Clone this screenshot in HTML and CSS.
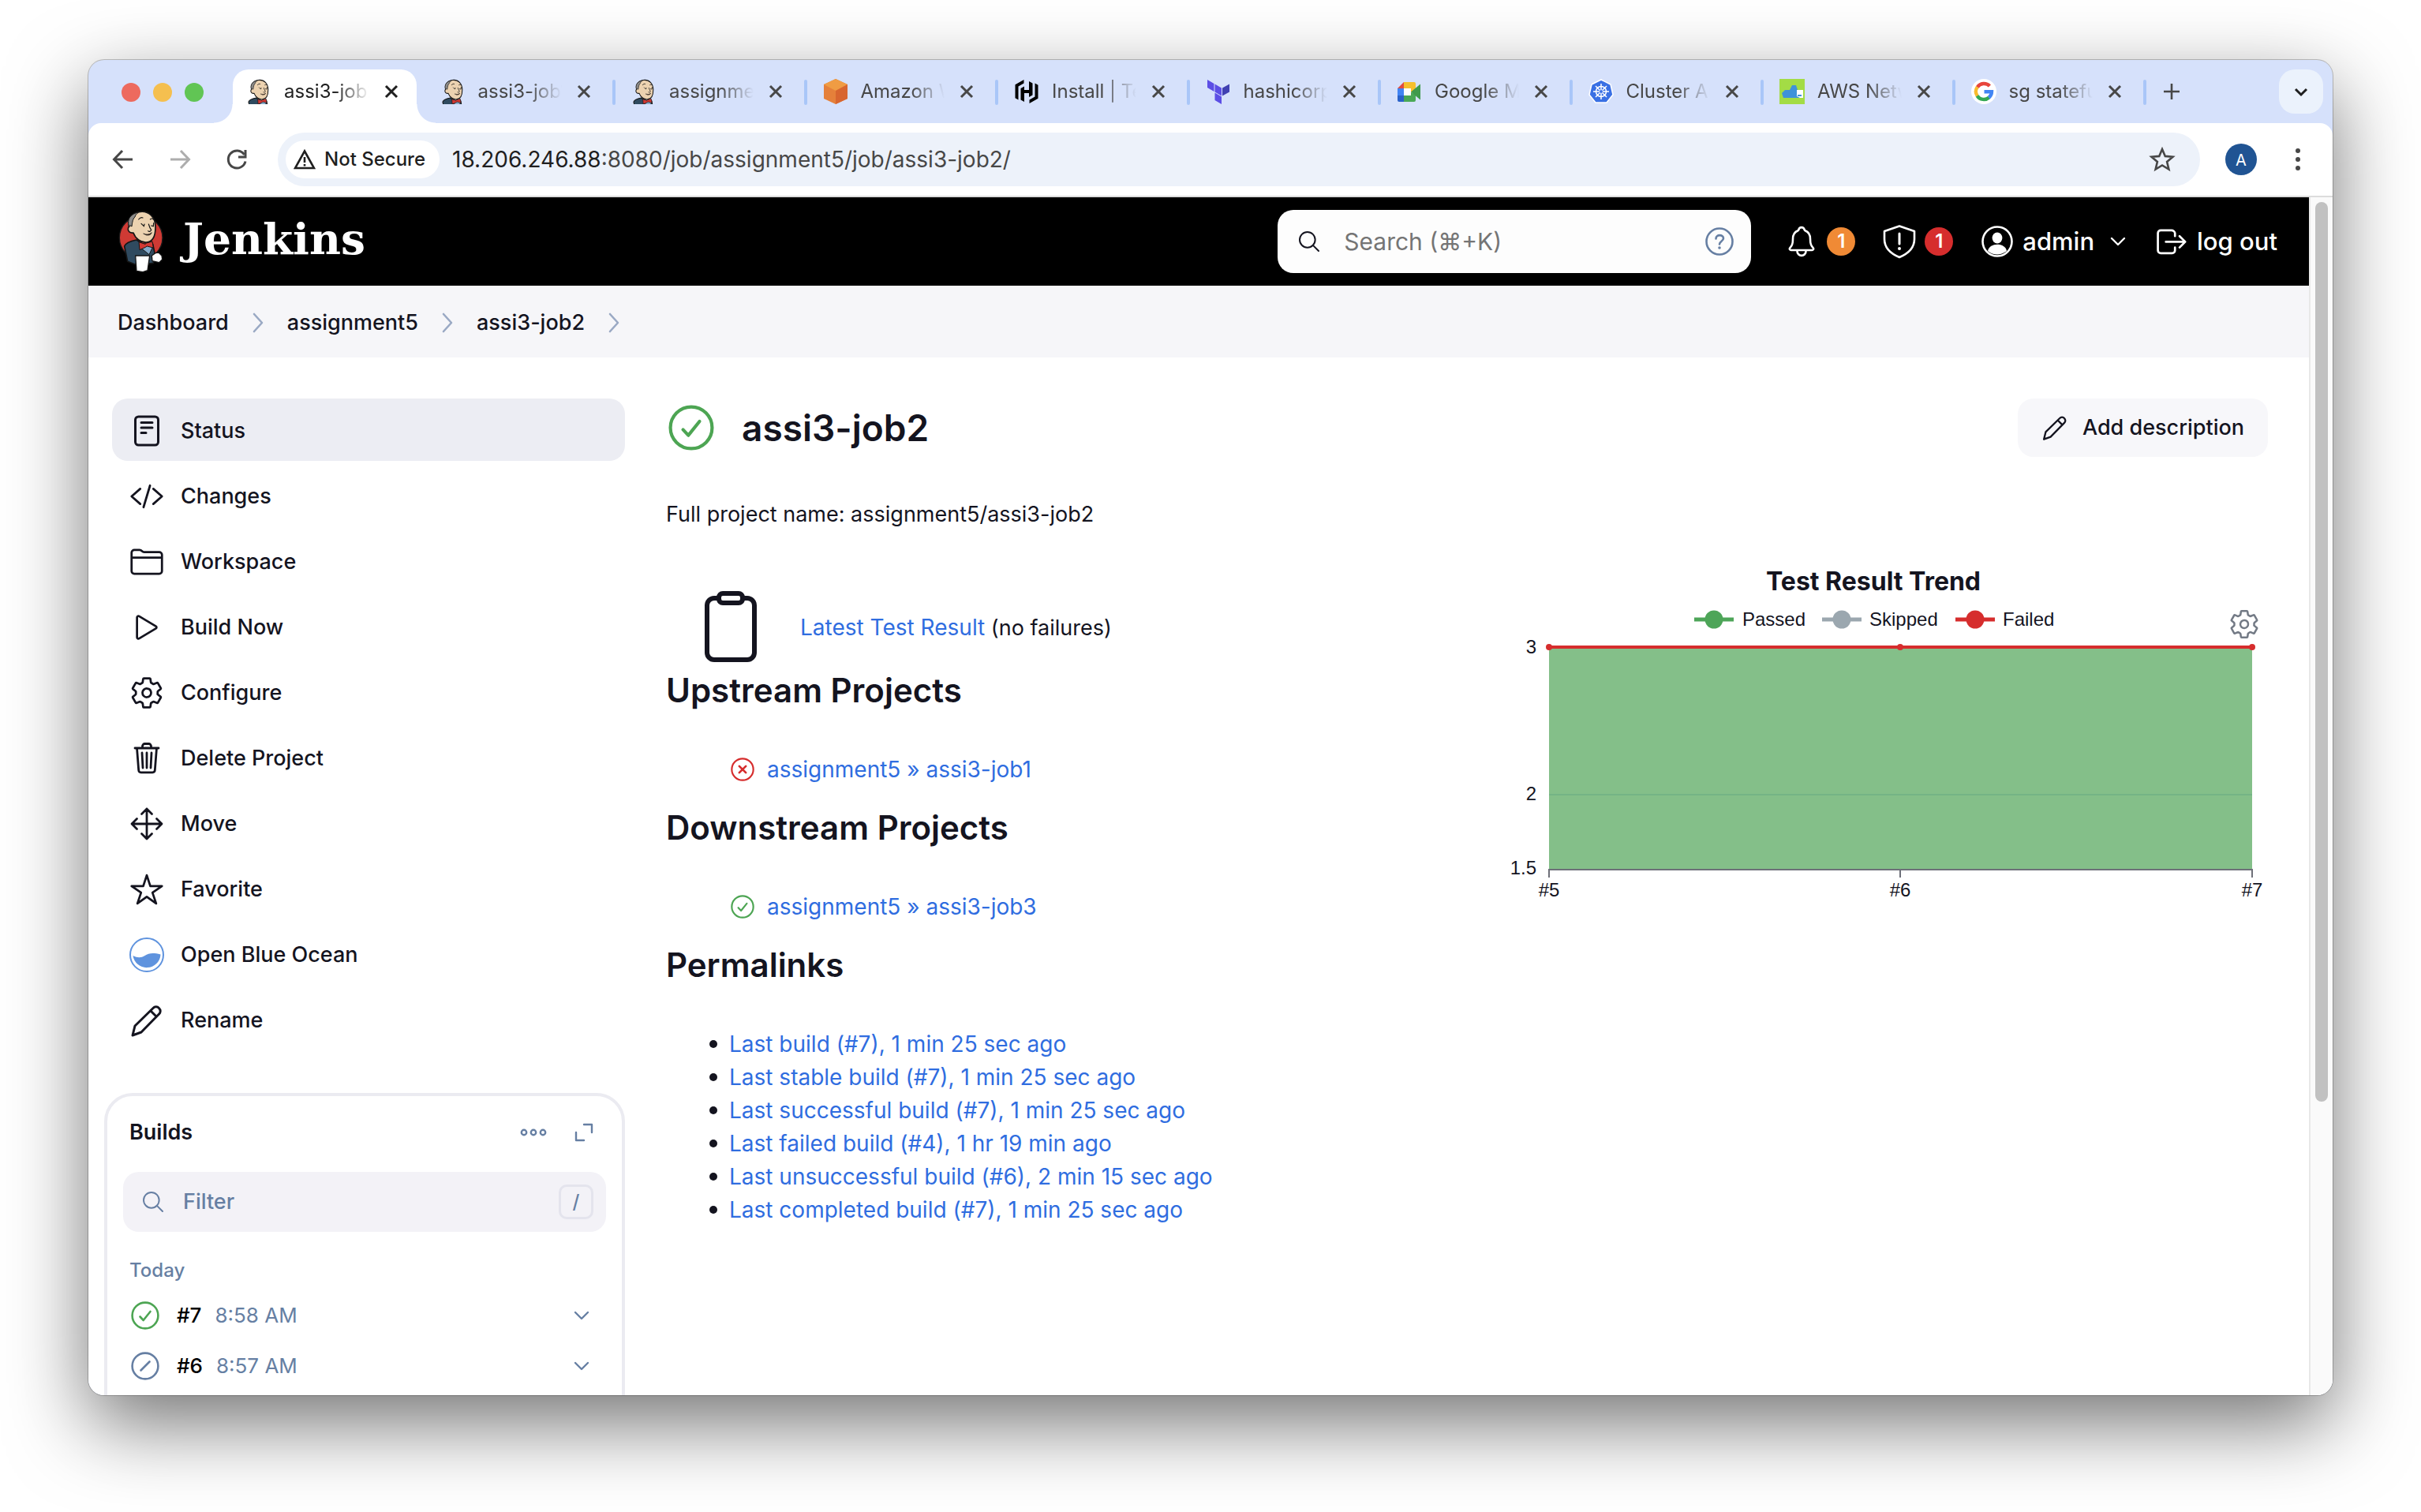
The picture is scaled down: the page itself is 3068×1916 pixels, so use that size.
FILE: index.html
```html
<!DOCTYPE html>
<html lang="en">
<head>
<meta charset="utf-8">
<title>assi3-job2 [Jenkins]</title>
<meta name="viewport" content="width=device-width, initial-scale=1">
<link rel="stylesheet" href="styles.css">
</head>
<body>

<svg class="sprite" aria-hidden="true">
  <symbol id="i-close" viewBox="0 0 24 24"><path d="M5 5l14 14M19 5L5 19" fill="none" stroke="currentColor" stroke-width="3"/></symbol>
  <symbol id="i-down" viewBox="0 0 24 24"><path d="M4 8l8 8 8-8" fill="none" stroke="currentColor" stroke-width="2.4" stroke-linecap="round" stroke-linejoin="round"/></symbol>
  <symbol id="i-chev" viewBox="0 0 16 28"><path d="M3 3l10 11L3 25" fill="none" stroke="currentColor" stroke-width="2.6" stroke-linecap="round" stroke-linejoin="round"/></symbol>
  <symbol id="i-search" viewBox="0 0 512 512"><path d="M221.09 64a157.09 157.09 0 10157.09 157.09A157.1 157.1 0 00221.09 64zM338.29 338.29L448 448" fill="none" stroke="currentColor" stroke-width="32" stroke-linecap="round"/></symbol>
  <symbol id="i-gear" viewBox="0 0 512 512"><path d="M262.29 192.31a64 64 0 1057.4 57.4 64.13 64.13 0 00-57.4-57.4zM416.39 256a154.34 154.34 0 01-1.53 20.79l45.21 35.46a10.81 10.81 0 012.45 13.75l-42.77 74a10.81 10.81 0 01-13.14 4.59l-44.9-18.08a16.11 16.11 0 00-15.17 1.75A164.48 164.48 0 01325 400.8a15.94 15.94 0 00-8.82 12.14l-6.73 47.89a11.08 11.08 0 01-10.68 9.17h-85.54a11.11 11.11 0 01-10.69-8.87l-6.72-47.82a16.07 16.07 0 00-9-12.22 155.3 155.3 0 01-21.46-12.57 16 16 0 00-15.11-1.71l-44.89 18.07a10.81 10.81 0 01-13.14-4.58l-42.77-74a10.8 10.8 0 012.45-13.75l38.21-30a16.05 16.05 0 006-14.08c-.36-4.17-.58-8.33-.58-12.5s.21-8.27.58-12.35a16 16 0 00-6.07-13.94l-38.19-30A10.81 10.81 0 0149.48 186l42.77-74a10.81 10.81 0 0113.14-4.59l44.9 18.08a16.11 16.11 0 0015.17-1.75A164.48 164.48 0 01187 111.2a15.94 15.94 0 008.82-12.14l6.73-47.89A11.08 11.08 0 01213.23 42h85.54a11.11 11.11 0 0110.69 8.87l6.72 47.82a16.07 16.07 0 009 12.22 155.3 155.3 0 0121.46 12.57 16 16 0 0015.11 1.71l44.89-18.07a10.81 10.81 0 0113.14 4.58l42.77 74a10.8 10.8 0 01-2.45 13.75l-38.21 30a16.05 16.05 0 00-6.05 14.08c.33 4.14.55 8.3.55 12.47z" fill="none" stroke="currentColor" stroke-width="32" stroke-linecap="round" stroke-linejoin="round"/></symbol>
  <symbol id="i-pencil" viewBox="0 0 44 44"><path d="M4 41l3-12L30 6.500a5 5 0 017.500 0a5 5 0 010 7.500L15 37zM27 10l7 7" fill="none" stroke="currentColor" stroke-width="3" stroke-linecap="round" stroke-linejoin="round"/></symbol>
  <symbol id="i-ok" viewBox="0 0 36 36"><circle cx="18" cy="18" r="16.400" fill="none" stroke="currentColor" stroke-width="2.600"/><path d="M11.500 19.500l4.200 4.500 8.800-11" fill="none" stroke="currentColor" stroke-width="2.600" stroke-linecap="round" stroke-linejoin="round"/></symbol>
  <symbol id="i-bad" viewBox="0 0 36 36"><circle cx="18" cy="18" r="16.400" fill="none" stroke="currentColor" stroke-width="2.600"/><path d="M13 13l10 10M23 13L13 23" fill="none" stroke="currentColor" stroke-width="3.200" stroke-linecap="round"/></symbol>
  <symbol id="i-aborted" viewBox="0 0 36 36"><circle cx="18" cy="18" r="16.400" fill="none" stroke="currentColor" stroke-width="2.600"/><path d="M12.500 23.500l11-11" fill="none" stroke="currentColor" stroke-width="2.600" stroke-linecap="round"/></symbol>

  <symbol id="butler" viewBox="20 18 172 240" overflow="hidden">
    <path d="M42 156c4-12 26-20 46-24l24 16 38 0 8 38-6 34-62 8-36-14-6-30z" fill="#2f4a5f" stroke="#141414" stroke-width="5" stroke-linejoin="round"/>
    <path d="M104 162l32 26 16-34-22-6z" fill="#84a9c9" stroke="#141414" stroke-width="3"/>
    <path d="M60 82C52 50 72 28 102 25c34-4 58 22 58 58 0 34-10 56-34 58-22 2-42-14-50-36-12 2-22-6-20-16 1-6 3-8 4-7z" fill="#ecd2b0" stroke="#141414" stroke-width="5" stroke-linejoin="round"/>
    <path d="M59 80C50 54 66 32 96 27c-8 6-12 10-14 18-8 6-10 20-12 36-4-4-8-4-11-1z" fill="#8b8a88" stroke="#141414" stroke-width="3"/>
    <path d="M96 54q8-10 16-6M140 54q8-6 12 0M106 70l10 10 2-8M144 78l8 2 1-12M134 72q4 14 10 22-6 10-12 4" fill="none" stroke="#141414" stroke-width="3.500" stroke-linecap="round"/>
    <path d="M114 108q18 8 32-4-4 12-20 10z" fill="#5a3b2d" stroke="#141414" stroke-width="2"/>
    <path d="M97 140l24 8 5-4 22-6 4 24-24-6-6 4-22 10z" fill="#d33833" stroke="#141414" stroke-width="3" stroke-linejoin="round"/>
    <path d="M146 192l14-10 12-2 12 12 2 14-12 12-26-6z" fill="#fff" stroke="#141414" stroke-width="4"/>
    <path d="M84 192l54 0-8 56-18 6-24-4z" fill="#fff" stroke="#141414" stroke-width="4" stroke-linejoin="round"/>
  </symbol>
  <symbol id="fav-jenkins" viewBox="30 18 148 152"><use href="#butler" x="20" y="18" width="172" height="240"/></symbol>
</svg>

<div class="window">
  <header class="tabstrip">
    <div class="lights"><i class="light red"></i><i class="light amber"></i><i class="light green"></i></div>
    <ul class="tabs">
      <li class="tab active"><div class="tab-body"><svg class="fav"><use href="#fav-jenkins"/></svg><span class="tab-label">assi3-job2</span><button class="tab-close" aria-label="Close tab"><svg><use href="#i-close"/></svg></button></div></li>
      <li class="tab"><div class="tab-body"><svg class="fav"><use href="#fav-jenkins"/></svg><span class="tab-label">assi3-job1</span><button class="tab-close" aria-label="Close tab"><svg><use href="#i-close"/></svg></button></div></li>
      <li class="tab"><div class="tab-body"><svg class="fav"><use href="#fav-jenkins"/></svg><span class="tab-label">assignment5</span><button class="tab-close" aria-label="Close tab"><svg><use href="#i-close"/></svg></button></div></li>
      <li class="tab"><div class="tab-body">
        <svg class="fav" viewBox="0 0 32 32"><path d="M16 0l15 7v18l-15 7L1 25V7z" fill="#e5803a"/><path d="M16 0l15 7-15 8L1 7z" fill="#f09c43"/><path d="M16 15l15-8v18l-15 7z" fill="#d8652f"/></svg>
        <span class="tab-label">Amazon Web</span><button class="tab-close" aria-label="Close tab"><svg><use href="#i-close"/></svg></button></div></li>
      <li class="tab"><div class="tab-body">
        <svg class="fav" viewBox="0 0 32 32"><path d="M12.500 1L1.500 7.300v17l4 2.300V9.600l7-4zM19.500 31l11-6.300v-17l-4-2.300v17l-7 4zM8.500 12l4.500-2.500V14h6V3l4.500 2.500v15L19 23v-5h-6v11l-4.500-2.500z" fill="#000"/></svg>
        <span class="tab-label">Install | Terraform</span><button class="tab-close" aria-label="Close tab"><svg><use href="#i-close"/></svg></button></div></li>
      <li class="tab"><div class="tab-body">
        <svg class="fav" viewBox="0 0 32 32"><path d="M2 1l8.500 5v10L2 11zM11.500 6.500l8.500 5v10l-8.500-5zM11.500 17.500l8.500 5V32l-8.500-5z" fill="#5c4ee5"/><path d="M21 11.500l9-5v10l-9 5z" fill="#4040b2"/></svg>
        <span class="tab-label">hashicorp/</span><button class="tab-close" aria-label="Close tab"><svg><use href="#i-close"/></svg></button></div></li>
      <li class="tab"><div class="tab-body">
        <svg class="fav" viewBox="0 0 32 32"><path d="M1 12h8v10H1z" fill="#4284f3"/><path d="M1 21h8v8H3a2 2 0 01-2-2z" fill="#2a62c9"/><path d="M1 12l8-8v8z" fill="#e04a3f"/><path d="M9 4h13a2 2 0 012 2v8l-6 3v-5H9z" fill="#f6bf2d"/><path d="M9 21h9v-4l6 3v7a2 2 0 01-2 2H9z" fill="#4aa856"/><path d="M9 12h9v9H9z" fill="#fff"/><path d="M18 16.500l12-10v20z" fill="#3f9a4c"/></svg>
        <span class="tab-label">Google Meet</span><button class="tab-close" aria-label="Close tab"><svg><use href="#i-close"/></svg></button></div></li>
      <li class="tab"><div class="tab-body">
        <svg class="fav" viewBox="0 0 32 32"><path d="M16 1l12 6 3 13-8 10H9L1 20 4 7z" fill="#3970e4" stroke="#fff" stroke-width="1.500" stroke-linejoin="round"/><g fill="none" stroke="#fff" stroke-width="1.500"><circle cx="16" cy="16" r="6.500"/><path d="M16 6v20M6 16h20M9 9l14 14M23 9L9 23"/></g><circle cx="16" cy="16" r="2" fill="#3970e4"/></svg>
        <span class="tab-label">Cluster Autoscaler</span><button class="tab-close" aria-label="Close tab"><svg><use href="#i-close"/></svg></button></div></li>
      <li class="tab"><div class="tab-body">
        <svg class="fav" viewBox="0 0 32 32"><path d="M0 0h32v32H0z" fill="#a3dc45"/><path d="M3 18l4-4h6l3-6h5l2 6h4v10H5z" fill="#3f92d9"/><path d="M22 14h8v10h-4l-4-2z" fill="#fff"/><path d="M23 20h5v2h-5z" fill="#3f92d9"/></svg>
        <span class="tab-label">AWS Network</span><button class="tab-close" aria-label="Close tab"><svg><use href="#i-close"/></svg></button></div></li>
      <li class="tab"><div class="tab-body">
        <svg class="fav" viewBox="0 0 32 32"><circle cx="16" cy="16" r="16" fill="#fff"/><g fill="none" stroke-width="4.400"><path d="M23.400 9A10 10 0 007.800 10.500" stroke="#e8453c"/><path d="M7.800 10.300a10 10 0 000 11.400" stroke="#f9bb2d"/><path d="M7.600 21.500a10 10 0 0015 2" stroke="#34a853"/><path d="M16.500 16.200H26a10 10 0 01-3.600 7.500" stroke="#4285f4"/></g></svg>
        <span class="tab-label">sg stateful</span><button class="tab-close" aria-label="Close tab"><svg><use href="#i-close"/></svg></button></div></li>
    </ul>
    <button class="new-tab" aria-label="New tab"><svg viewBox="0 0 24 24"><path d="M12 2v20M2 12h20" fill="none" stroke="currentColor" stroke-width="2.600"/></svg></button>
    <button class="tab-search" aria-label="Search tabs"><svg viewBox="0 0 24 24"><path d="M5 9l7 7 7-7" fill="none" stroke="currentColor" stroke-width="3"/></svg></button>
  </header>

  <div class="toolbar">
    <button class="tool" aria-label="Back"><svg viewBox="0 0 40 40"><path d="M32 20H9M19 9L8.500 20 19 31" fill="none" stroke="currentColor" stroke-width="3"/></svg></button>
    <button class="tool dim" aria-label="Forward"><svg viewBox="0 0 40 40"><path d="M8 20h23M21 9l10.500 11L21 31" fill="none" stroke="currentColor" stroke-width="3"/></svg></button>
    <button class="tool" aria-label="Reload"><svg viewBox="0 0 40 40"><path d="M29.500 14A11 11 0 1031 22.500" fill="none" stroke="currentColor" stroke-width="3"/><path d="M31 8v9h-9" fill="none" stroke="currentColor" stroke-width="3"/></svg></button>
    <div class="omnibox">
      <button class="chip"><svg viewBox="0 0 28 28"><path d="M14 3.500L26 25H2z" fill="none" stroke="currentColor" stroke-width="2.600"/><path d="M14 11v7M14 20v2.600" stroke="currentColor" stroke-width="2.600"/></svg>Not Secure</button>
      <span class="url"><b>18.206.246.88</b>:8080/job/assignment5/job/assi3-job2/</span>
      <button class="tool" aria-label="Bookmark"><svg viewBox="0 0 40 40"><path d="M20 7l3.800 8.900 9.700.8-7.400 6.300 2.300 9.500-8.400-5.100-8.400 5.100 2.300-9.500-7.400-6.300 9.700-.8z" fill="none" stroke="currentColor" stroke-width="2.600"/></svg></button>
    </div>
    <button class="avatar">A</button>
    <button class="tool" aria-label="Menu"><svg viewBox="0 0 40 40"><g fill="currentColor"><circle cx="20" cy="9" r="3"/><circle cx="20" cy="20" r="3"/><circle cx="20" cy="31" r="3"/></g></svg></button>
  </div>

  <div class="viewport">
    <div class="page">
      <header class="masthead">
        <a class="brand" href="#">
          <svg class="brand-mark" viewBox="20 18 172 240"><circle cx="105" cy="124" r="82" fill="#cf3a34" stroke="#1a1a1a" stroke-width="4"/><use href="#butler" x="20" y="18" width="172" height="240"/></svg>
          <span>Jenkins</span>
        </a>
        <label class="search"><svg><use href="#i-search"/></svg><input type="search" aria-label="Search" placeholder="Search (⌘+K)"><a class="help" href="#" aria-label="Search help"><svg viewBox="0 0 36 36"><circle cx="18" cy="18" r="16.500" fill="none" stroke="currentColor" stroke-width="2.600"/><path d="M13.500 14.500c0-6 9.500-5.500 9.500-.5 0 3.800-5 3.600-5 7.500" fill="none" stroke="currentColor" stroke-width="2.600" stroke-linecap="round"/><circle cx="18" cy="26" r="1.800" fill="currentColor"/></svg></a></label>
        <nav class="user-nav">
          <a href="#" aria-label="Notifications"><svg viewBox="0 0 512 512"><path d="M427.680 351.430C402 320 383.870 304 383.870 217.350 383.870 138 343.350 109.730 310 96c-4.430-1.820-8.600-6-9.950-10.550C294.200 65.540 277.800 48 256 48s-38.210 17.550-44 37.470c-1.350 4.600-5.520 8.710-9.950 10.530-33.390 13.750-73.870 41.920-73.870 121.350C128.130 304 110 320 84.320 351.430 73.680 364.450 83 384 101.610 384h308.880c18.510 0 27.770-19.610 17.190-32.570zM320 384v16a64 64 0 01-128 0v-16" fill="none" stroke="currentColor" stroke-width="30" stroke-linejoin="round"/></svg><span class="badge warn">1</span></a>
          <a href="#" aria-label="Security warnings"><svg viewBox="0 0 44 44"><path d="M22 2.500l19 6.500v10c0 10-7 18-19 23C10 37 3 29 3 19V9z" fill="none" stroke="currentColor" stroke-width="2.600" stroke-linejoin="round"/><path d="M22 12v13" stroke="currentColor" stroke-width="3" stroke-linecap="round"/><circle cx="22" cy="31" r="2" fill="currentColor"/></svg><span class="badge danger">1</span></a>
          <a href="#"><svg viewBox="0 0 44 44"><circle cx="22" cy="22" r="18.500" fill="none" stroke="currentColor" stroke-width="2.600"/><ellipse cx="22" cy="17.500" rx="6.400" ry="7" fill="currentColor"/><path d="M10 34c2-11 22-11 24 0-7 6-17 6-24 0z" fill="currentColor"/></svg>admin<svg class="caret"><use href="#i-down"/></svg></a>
          <a href="#"><svg viewBox="0 0 512 512"><path d="M304 336v40a40 40 0 01-40 40H104a40 40 0 01-40-40V136a40 40 0 0140-40h152c22.090 0 48 17.910 48 40v40M368 336l80-80-80-80M176 256h256" transform="translate(-14 -8) scale(1.050)" fill="none" stroke="currentColor" stroke-width="30" stroke-linecap="round" stroke-linejoin="round"/></svg>log out</a>
        </nav>
      </header>

      <nav class="crumbs">
        <a href="#">Dashboard</a><svg><use href="#i-chev"/></svg><a href="#">assignment5</a><svg><use href="#i-chev"/></svg><a href="#">assi3-job2</a><svg><use href="#i-chev"/></svg>
      </nav>

      <div class="columns">
        <aside class="side">
          <nav class="tasks">
            <a class="task current" href="#"><svg viewBox="0 0 44 44"><g fill="none" stroke="currentColor" stroke-width="3" stroke-linecap="round"><rect x="7.500" y="4" width="29" height="36" rx="4"/><path d="M15 11.500h14M15 18h14M15 24.500h6"/></g></svg>Status</a>
            <a class="task" href="#"><svg viewBox="0 0 512 512"><path d="M160 368L32 256l128-112M352 368l128-112-128-112M304 96l-96 320" fill="none" stroke="currentColor" stroke-width="32" stroke-linecap="round" stroke-linejoin="round"/></svg>Changes</a>
            <a class="task" href="#"><svg viewBox="0 0 512 512"><path d="M440 432H72a40 40 0 01-40-40V120a40 40 0 0140-40h75.890a40 40 0 0122.190 6.720l27.840 18.560a40 40 0 0022.190 6.720H440a40 40 0 0140 40v240a40 40 0 01-40 40zM32 192h448" fill="none" stroke="currentColor" stroke-width="32" stroke-linecap="round" stroke-linejoin="round"/></svg>Workspace</a>
            <a class="task" href="#"><svg viewBox="0 0 512 512"><path d="M112 111v290c0 17.440 17 28.520 31 20.160l247.900-148.370c12.120-7.250 12.120-26.330 0-33.580L143 90.840c-14-8.360-31 2.720-31 20.160z" fill="none" stroke="currentColor" stroke-width="32"/></svg>Build Now</a>
            <a class="task" href="#"><svg><use href="#i-gear"/></svg>Configure</a>
            <a class="task" href="#"><svg viewBox="0 0 44 44"><g fill="none" stroke="currentColor" stroke-width="2.800" stroke-linecap="round" stroke-linejoin="round"><path d="M7 9h30M9.500 9l2.200 28a3 3 0 003 2.800h14.600a3 3 0 003-2.800l2.200-28M16.500 9V6.500a3 3 0 013-3h5a3 3 0 013 3V9M16 15l1 19M22 15v19M28 15l-1 19"/></g></svg>Delete Project</a>
            <a class="task" href="#"><svg viewBox="0 0 44 44"><path d="M22 3v38M3 22h38M15.500 9.500L22 3l6.500 6.500M15.500 34.500L22 41l6.500-6.500M9.500 15.500L3 22l6.500 6.500M34.500 15.500L41 22l-6.500 6.500" fill="none" stroke="currentColor" stroke-width="2.800" stroke-linecap="round" stroke-linejoin="round"/></svg>Move</a>
            <a class="task" href="#"><svg viewBox="0 0 512 512"><path d="M480 208H308L256 48l-52 160H32l140 96-54 160 138-100 138 100-54-160z" fill="none" stroke="currentColor" stroke-width="32" stroke-linejoin="round"/></svg>Favorite</a>
            <a class="task" href="#"><svg viewBox="0 0 44 44"><circle cx="22" cy="22" r="21" fill="none" stroke="#5f93de" stroke-width="2"/><path d="M4.500 23c6 3 10 3 15 0s10-4 20-1.500a17.600 17.600 0 01-35 1.500z" fill="#5f93de"/></svg>Open Blue Ocean</a>
            <a class="task" href="#"><svg><use href="#i-pencil"/></svg>Rename</a>
          </nav>

          <section class="builds">
            <div class="builds-head">
              <h2>Builds</h2>
              <button aria-label="More"><svg class="w40" viewBox="0 0 40 40"><g fill="none" stroke="currentColor" stroke-width="2.400"><circle cx="8" cy="20" r="3.200"/><circle cx="20" cy="20" r="3.200"/><circle cx="32" cy="20" r="3.200"/></g></svg></button>
              <button aria-label="Expand"><svg class="w32" viewBox="0 0 32 32"><path d="M16 6h10v10M6 16v10h10" fill="none" stroke="currentColor" stroke-width="2.400" stroke-linecap="round" stroke-linejoin="round"/></svg></button>
            </div>
            <label class="filter"><svg><use href="#i-search"/></svg><input type="text" aria-label="Filter builds" placeholder="Filter"><kbd>/</kbd></label>
            <p class="day">Today</p>
            <a class="build" href="#"><svg class="ok"><use href="#i-ok"/></svg><b>#7</b><span>8:58 AM</span><svg class="caret"><use href="#i-down"/></svg></a>
            <a class="build" href="#"><svg><use href="#i-aborted"/></svg><b>#6</b><span>8:57 AM</span><svg class="caret"><use href="#i-down"/></svg></a>
          </section>
        </aside>

        <main class="main">
          <div class="title-row">
            <svg class="status ok"><use href="#i-ok"/></svg>
            <h1>assi3-job2</h1>
            <button class="describe"><svg><use href="#i-pencil"/></svg>Add description</button>
          </div>
          <p class="full-name">Full project name: assignment5/assi3-job2</p>
          <div class="split">
            <div class="details">
              <div class="latest">
                <svg viewBox="0 0 96 96"><g fill="none" stroke="currentColor" stroke-width="6" stroke-linejoin="round"><rect x="18" y="11" width="60" height="78" rx="9"/><rect x="33" y="5" width="30" height="12" rx="5" fill="#fff"/></g></svg>
                <p><a href="#">Latest Test Result</a> (no failures)</p>
              </div>
              <h2>Upstream Projects</h2>
              <ul class="projects"><li><svg class="bad"><use href="#i-bad"/></svg><a href="#">assignment5 » assi3-job1</a></li></ul>
              <h2>Downstream Projects</h2>
              <ul class="projects"><li><svg class="ok"><use href="#i-ok"/></svg><a href="#">assignment5 » assi3-job3</a></li></ul>
              <h2>Permalinks</h2>
              <ul class="permalinks">
                <li><a href="#">Last build (#7), 1 min 25 sec ago</a></li>
                <li><a href="#">Last stable build (#7), 1 min 25 sec ago</a></li>
                <li><a href="#">Last successful build (#7), 1 min 25 sec ago</a></li>
                <li><a href="#">Last failed build (#4), 1 hr 19 min ago</a></li>
                <li><a href="#">Last unsuccessful build (#6), 2 min 15 sec ago</a></li>
                <li><a href="#">Last completed build (#7), 1 min 25 sec ago</a></li>
              </ul>
            </div>
            <svg class="chart" viewBox="0 0 1000 460" role="img" aria-label="Test Result Trend">
              <text class="chart-title" x="500" y="48" text-anchor="middle">Test Result Trend</text>
              <g stroke-width="5">
                <path d="M273 85h50" stroke="#4da558"/><circle cx="298" cy="85" r="11.500" fill="#4da558"/>
                <path d="M435 85h50" stroke="#9ba7af"/><circle cx="460" cy="85" r="11.500" fill="#9ba7af"/>
                <path d="M604 85h50" stroke="#d62d2d"/><circle cx="629" cy="85" r="11.500" fill="#d62d2d"/>
              </g>
              <g class="chart-text">
                <text x="334" y="93">Passed</text><text x="495" y="93">Skipped</text><text x="664" y="93">Failed</text>
                <g text-anchor="end"><text x="73" y="128">3</text><text x="73" y="314">2</text><text x="73" y="408">1.5</text></g>
                <g text-anchor="middle"><text x="89" y="436">#5</text><text x="534" y="436">#6</text><text x="980" y="436">#7</text></g>
              </g>
              <path d="M89 120h891v282H89z" fill="#84bf89"/>
              <path d="M89 307h891" stroke="#74b485" stroke-width="2"/>
              <path d="M88 402h893M89 402v10M534 402v10M980 402v10" fill="none" stroke="#6e7079" stroke-width="2"/>
              <path d="M89 120h891" stroke="#d62d2d" stroke-width="4"/>
              <g fill="#d62d2d"><circle cx="89" cy="120" r="4"/><circle cx="534" cy="120" r="4"/><circle cx="980" cy="120" r="4"/></g>
              <use class="chart-gear" href="#i-gear" x="950" y="71" width="40" height="40"/>
            </svg>
          </div>
        </main>
      </div>
    </div>
    <div class="scrollbar"><i></i></div>
  </div>
</div>
</body>
</html>
```

FILE: styles.css
```css
:root {
  --text: #14141f;
  --muted: #667fa3;
  --link: #2f6de0;
  --green: #4da553;
  --red: #d62d2d;
  --strip: #d6e1fb;
  --grey: #474747;
}

* { box-sizing: border-box; }

body {
  margin: 0;
  height: 100vh;
  padding: 76px 112px 148px;
  display: flex;
  background: #fff;
  color: var(--text);
  font: 27px/42px Inter, "Noto Sans", sans-serif;
}

h1, h2, p, ul { margin: 0; padding: 0; }
ul { list-style: none; }
a { color: inherit; text-decoration: none; }
svg { display: block; flex: none; }
button, input {
  margin: 0;
  padding: 0;
  border: 0;
  background: none;
  color: inherit;
  font: inherit;
}
input { outline: 0; min-width: 0; flex: 1; }
.sprite { position: absolute; width: 0; height: 0; }
.ok { color: var(--green); }
.bad { color: var(--red); }

.window {
  flex: 1;
  min-width: 0;
  display: flex;
  flex-direction: column;
  overflow: hidden;
  border-radius: 20px;
  background: var(--strip);
  box-shadow: 0 0 0 1px rgba(0, 0, 0, .22), 0 36px 100px rgba(0, 0, 0, .55);
}

/* Tab strip */
.tabstrip {
  height: 80px;
  flex: none;
  display: flex;
  align-items: flex-start;
  padding: 12px 12px 0 42px;
  font-size: 24px;
  line-height: 32px;
  color: var(--grey);
}
.lights { display: flex; gap: 16px; padding-top: 17px; margin-right: 37px; }
.light { width: 24px; height: 24px; border-radius: 50%; }
.light.red { background: #ed6a5e; }
.light.amber { background: #f5bf4f; }
.light.green { background: #61c554; }
.tabs { flex: 1; min-width: 0; display: flex; }
.tab { flex: 1; min-width: 0; display: flex; gap: 4px; }
.tab::after {
  content: "";
  width: 4px;
  height: 32px;
  margin-top: 13px;
  border-radius: 2px;
  background: #a9c6f8;
}
.tab.active { gap: 6px; }
.tab.active::after { background: none; }
.tab-body {
  position: relative;
  flex: 1;
  min-width: 0;
  height: 68px;
  display: flex;
  align-items: center;
  gap: 16px;
  padding: 0 20px 12px 20px;
}
.active .tab-body { padding-left: 17px; background: #fff; border-radius: 20px 20px 0 0; color: #1f1f1f; }
.active .tab-body::before, .active .tab-body::after {
  content: "";
  position: absolute;
  bottom: 0;
  width: 24px;
  height: 24px;
  background: radial-gradient(circle at 0 0, transparent 23px, #fff 24px);
}
.active .tab-body::before { left: -24px; }
.active .tab-body::after { right: -24px; background: radial-gradient(circle at 100% 0, transparent 23px, #fff 24px); }
.fav { width: 32px; height: 32px; }
.tab-label {
  flex: 1;
  overflow: hidden;
  white-space: nowrap;
  -webkit-mask-image: linear-gradient(90deg, #000 60%, transparent 100%);
  mask-image: linear-gradient(90deg, #000 60%, transparent 100%);
}
.tab-close svg { width: 24px; height: 24px; }
.new-tab { width: 66px; padding: 16px 20px; }
.new-tab svg { width: 24px; height: 24px; }
.tab-search {
  width: 56px;
  height: 56px;
  margin-left: 102px;
  padding: 16px;
  border-radius: 20px;
  background: #ebf2fc;
  color: #1f1f1f;
}

/* Toolbar */
.toolbar {
  flex: none;
  display: flex;
  align-items: center;
  gap: 32px;
  padding: 12px 24px;
  border-bottom: 2px solid #dcdcdc;
  border-radius: 16px 16px 0 0;
  background: #fff;
  color: var(--grey);
}
.tool { width: 40px; height: 40px; }
.tool.dim { color: #adadad; }
.omnibox {
  flex: 1;
  height: 68px;
  display: flex;
  align-items: center;
  gap: 16px;
  padding: 0 28px 0 10px;
  border-radius: 34px;
  background: #edf2fa;
}
.chip {
  height: 48px;
  display: flex;
  align-items: center;
  gap: 11px;
  padding: 0 18px 0 10px;
  border-radius: 24px;
  background: #fff;
  color: #1f1f1f;
  font-size: 24px;
  font-weight: 500;
}
.chip svg { width: 28px; height: 28px; }
.url { flex: 1; font-size: 28px; }
.url b { color: #1f1f1f; font-weight: 400; }
.avatar {
  width: 40px;
  height: 40px;
  border-radius: 50%;
  background: #205493;
  color: #fff;
  font-size: 20px;
}

/* Page area */
.viewport { flex: 1; min-height: 0; display: flex; background: #fff; }
.page { flex: 1; min-width: 0; overflow: hidden; }
.scrollbar {
  width: 30px;
  padding: 6px 6px 0;
  border-left: 2px solid #e8e8e8;
  background: #fafafa;
}
.scrollbar i { display: block; width: 16px; height: calc(75% + 6px); border-radius: 8px; background: #c1c1c1; }

.masthead {
  height: 112px;
  display: flex;
  align-items: center;
  gap: 42px;
  padding: 0 40px 0 38px;
  background: #000;
  color: #fff;
  font-size: 31px;
  font-weight: 500;
}
.brand {
  display: flex;
  align-items: center;
  gap: 24px;
  margin-right: auto;
  font: bold 55px/76px "DejaVu Serif", serif;
}
.brand span { padding-bottom: 6px; }
.brand-mark { width: 58px; height: 80px; }
.search {
  width: 600px;
  height: 80px;
  display: flex;
  align-items: center;
  gap: 28px;
  padding: 0 22px 0 24px;
  border-radius: 20px;
  background: #fdfdfd;
  color: var(--text);
  font-size: 30px;
  font-weight: 400;
}
.search > svg { width: 32px; height: 32px; }
.search input::placeholder { color: #757575; opacity: 1; }
.help { color: var(--muted); }
.help svg { width: 36px; height: 36px; }
.user-nav { display: flex; gap: 34px; }
.user-nav a { display: flex; align-items: center; gap: 10px; }
.user-nav svg { width: 44px; height: 44px; }
.user-nav .caret { width: 24px; height: 24px; margin-left: 8px; }
.badge {
  width: 36px;
  height: 36px;
  border-radius: 50%;
  font-size: 24px;
  font-weight: 600;
  line-height: 36px;
  text-align: center;
}
.badge.warn { background: #f08a35; }
.badge.danger { background: #d62d2d; }

.crumbs {
  height: 91px;
  display: flex;
  align-items: center;
  gap: 29px;
  padding: 2px 37px 0;
  background: #f6f6f9;
  font-weight: 500;
}
.crumbs svg { width: 16px; height: 28px; color: #9aa9c4; }

.columns {
  display: grid;
  grid-template-columns: 680px minmax(0, 1fr);
  gap: 52px;
  padding: 52px 52px 0 0;
}

/* Sidebar */
.side { padding-left: 20px; }
.tasks { display: flex; flex-direction: column; gap: 4px; padding-left: 10px; }
.task {
  height: 79px;
  display: flex;
  align-items: center;
  gap: 21px;
  padding: 2px 22px 0;
  border-radius: 20px;
  font-weight: 500;
}
.task svg { width: 44px; height: 44px; }
.task.current { background: #ecedf3; }

.builds {
  margin-top: 54px;
  padding: 0 20px 80px;
  border: 4px solid #ebebf1;
  border-radius: 36px;
}
.builds-head {
  height: 96px;
  display: flex;
  align-items: center;
  gap: 28px;
  padding: 0 12px 4px 8px;
  color: var(--muted);
}
.builds-head h2 { margin-right: auto; color: var(--text); font-size: 27px; font-weight: 600; line-height: 42px; }
.w40 { width: 40px; height: 40px; }
.w32 { width: 32px; height: 32px; }
.filter {
  height: 76px;
  display: flex;
  align-items: center;
  gap: 22px;
  padding: 0 16px 0 22px;
  border-radius: 20px;
  background: #f3f2f7;
  color: var(--muted);
  font-weight: 500;
}
.filter > svg { width: 32px; height: 32px; }
.filter input::placeholder { color: var(--muted); opacity: 1; }
.filter kbd {
  width: 44px;
  height: 44px;
  border: 3px solid #e4e4ed;
  border-radius: 10px;
  font: 500 24px/38px Inter, sans-serif;
  text-align: center;
}
.day {
  margin: 32px 8px 8px;
  color: var(--muted);
  font-size: 24px;
  font-weight: 500;
  line-height: 34px;
}
.build {
  height: 64px;
  display: flex;
  align-items: center;
  padding: 0 19px 0 10px;
  color: var(--muted);
  font-size: 26px;
}
.build b { margin: 0 17px 0 22px; color: #000; font-weight: 500; }
.build svg { width: 36px; height: 36px; }
.build .caret { width: 24px; height: 24px; margin-left: auto; }

/* Main column */
.title-row { display: flex; align-items: center; gap: 32px; }
.title-row h1 { margin-right: auto; font-size: 46px; font-weight: 600; line-height: 74px; }
.status { width: 64px; height: 64px; padding: 3px; }
.describe {
  height: 74px;
  display: flex;
  align-items: center;
  gap: 18px;
  padding: 0 30px;
  border-radius: 20px;
  background: #f7f7fa;
  font-weight: 500;
}
.describe svg { width: 34px; height: 34px; }
.full-name { margin-top: 52px; }
.split { display: flex; align-items: flex-start; }
.details { flex: 1; padding-top: 74px; }
.details a { color: var(--link); font-size: 28px; font-weight: 400; }
.latest { display: flex; align-items: center; gap: 40px; padding-left: 34px; margin-bottom: 5px; }
.latest svg { width: 96px; height: 96px; }
.details h2 { font-size: 42px; font-weight: 600; line-height: 54px; }
.projects { margin: 52px 0 26px; padding-left: 82px; }
.projects li { display: flex; align-items: center; gap: 16px; }
.projects svg { width: 30px; height: 30px; }
.permalinks { margin-top: 52px; padding-left: 55px; }
.permalinks li { display: flex; align-items: center; gap: 15px; }
.permalinks li::before { content: ""; width: 10px; height: 10px; border-radius: 50%; background: var(--text); }

.chart { width: 1000px; margin-top: 27px; }
.chart-title { font-size: 32px; font-weight: 700; fill: var(--text); }
.chart-text { font-family: "Liberation Sans", sans-serif; font-size: 24px; fill: var(--text); }
.chart-gear { color: #737a85; }
```
